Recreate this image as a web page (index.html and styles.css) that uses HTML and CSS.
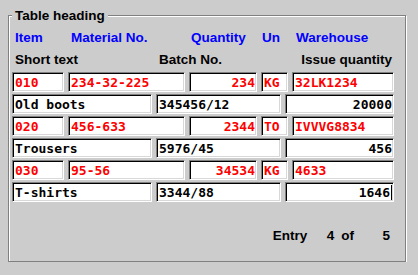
FILE: index.html
```html
<!DOCTYPE html>
<html lang="en">
  <head>
    <meta charset="UTF-8" />
    <meta name="viewport" content="width=device-width, initial-scale=1.0" />
    <title>Table heading</title>
    <link rel="stylesheet" href="styles.css">
  </head>
  <body>
    <div class="group">
      <div class="group-title">Table heading</div>

      <div class="table">
        <!-- column headings -->
        <div class="row row-item head head-blue">
          <span class="head-cell">Item</span>
          <span class="head-cell">Material No.</span>
          <span class="head-cell head-qty">Quantity</span>
          <span class="head-cell head-un">Un</span>
          <span class="head-cell head-wh">Warehouse</span>
        </div>
        <div class="row row-text head">
          <span class="head-cell">Short text</span>
          <span class="head-cell">Batch No.</span>
          <span class="head-cell head-right">Issue quantity</span>
        </div>

        <!-- entries -->
        <div class="row row-item">
          <div class="field red">010</div>
          <div class="field red">234-32-225</div>
          <div class="field red num">234</div>
          <div class="field red">KG</div>
          <div class="field red">32LK1234</div>
        </div>
        <div class="row row-text">
          <div class="field">Old boots</div>
          <div class="field">345456/12</div>
          <div class="field num">20000</div>
        </div>

        <div class="row row-item">
          <div class="field red">020</div>
          <div class="field red">456-633</div>
          <div class="field red num">2344</div>
          <div class="field red">TO</div>
          <div class="field red">IVVVG8834</div>
        </div>
        <div class="row row-text">
          <div class="field">Trousers</div>
          <div class="field">5976/45</div>
          <div class="field num">456</div>
        </div>

        <div class="row row-item">
          <div class="field red">030</div>
          <div class="field red">95-56</div>
          <div class="field red num">34534</div>
          <div class="field red">KG</div>
          <div class="field red">4633</div>
        </div>
        <div class="row row-text">
          <div class="field">T-shirts</div>
          <div class="field">3344/88</div>
          <div class="field num">1646<span class="caret"></span></div>
        </div>
      </div>

      <div class="footer">
        <span>Entry</span>
        <span class="count">4</span>
        <span class="of">of</span>
        <span class="count count-last">5</span>
      </div>
    </div>
  </body>
</html>
```

FILE: styles.css
```css
body {
  margin: 0;
  background: #cccccc;
  font-family: "Liberation Sans", Arial, sans-serif;
}

.group {
  margin: 15px 0 0 8px;
  width: 382px;
  height: 245px;
  padding: 0 11px 0 3px;
  border: 1px solid #808080;
  box-shadow: 1px 1px 0 #fff, inset 1px 1px 0 #fff;
}

.group-title {
  display: table;
  margin: -8px 0 4px;
  padding: 0 3px;
  background: #cccccc;
  font-size: 13.5px;
  font-weight: bold;
  line-height: 16px;
  color: #000;
}

.table {
  display: flex;
  flex-direction: column;
  gap: 2px;
}

.row {
  display: grid;
  column-gap: 4px;
  height: 20px;
}

.row-item {
  grid-template-columns: 52px 117px 68px 27px 102px;
}

.row-text {
  grid-template-columns: 140px 125px 109px;
}

.head {
  font-size: 13.5px;
  font-weight: bold;
  line-height: 20px;
  color: #000;
}

.head-blue {
  color: #0000ff;
}

.head-cell {
  padding-left: 3px;
  white-space: nowrap;
}

.head-qty {
  padding-left: 2px;
}

.head-un {
  padding-left: 1px;
}

.head-wh {
  padding-left: 4px;
}

.head-right {
  text-align: right;
  padding-right: 2px;
}

.field {
  box-sizing: border-box;
  height: 20px;
  padding: 1px 1px 0 2px;
  background: #fff;
  border: 1px solid;
  border-color: #808080 #fff #fff #808080;
  box-shadow: inset 1px 1px 0 #000, inset -1px -1px 0 #d8d8d8;
  font-family: "DejaVu Sans Mono", "Liberation Mono", monospace;
  font-size: 13px;
  font-weight: bold;
  line-height: 17px;
  color: #000;
  white-space: nowrap;
  overflow: hidden;
}

.red {
  color: #ff0000;
}

.num {
  text-align: right;
}

.caret {
  display: inline-block;
  width: 1px;
  height: 15px;
  margin-left: 1px;
  vertical-align: -3px;
  background: #000;
}

.footer {
  display: flex;
  justify-content: flex-end;
  margin-top: 24px;
  padding-right: 4px;
  height: 20px;
  font-size: 13.5px;
  font-weight: bold;
  line-height: 20px;
}

.count {
  width: 27px;
  text-align: right;
}

.of {
  margin-left: 7px;
}

.count-last {
  width: 36px;
}
```
